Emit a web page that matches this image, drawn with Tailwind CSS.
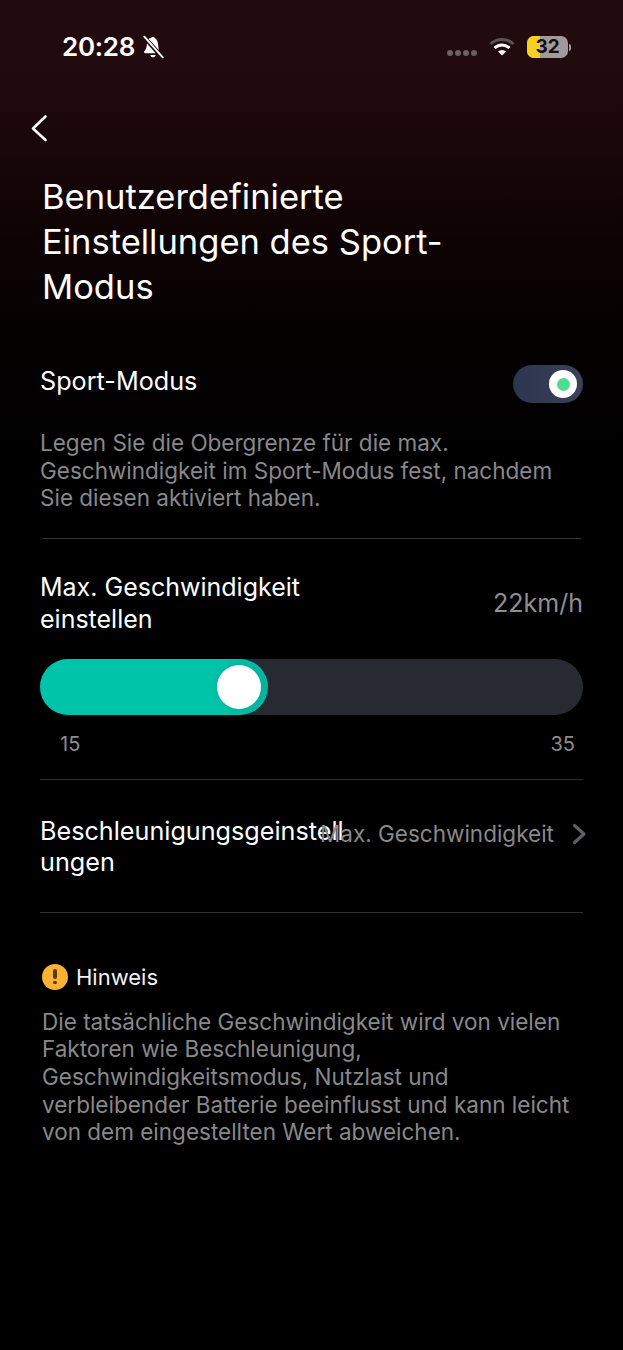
<!DOCTYPE html>
<html lang="en">
<head>
    <meta charset="UTF-8">
    <meta name="viewport" content="width=device-width, initial-scale=1.0">
    <title>Sport-Modus</title>
    <script src="https://cdn.jsdelivr.net/npm/@tailwindcss/browser@4"></script>
</head>
<body class="bg-black">
    <div class="w-[623px] h-[1350px] overflow-hidden font-['Inter',sans-serif] text-white bg-gradient-to-b from-[#220b0e] from-[5%] to-black to-[42%]">
        <!-- Status bar -->
        <div class="h-[94px] flex items-start justify-between pt-[31px] pl-[62px] pr-[52px]">
            <div class="flex items-center gap-[5px]">
                <span class="text-[26px] leading-[31px] font-semibold tracking-[-0.3px]">20:28</span>
                <svg class="w-[26px] h-[26px]" viewBox="0 0 24 24" fill="#fff">
                    <path d="M12 2.500c-1 0-1.600.7-1.700 1.500C7.600 4.700 6.400 7 6.300 9.500c-.1 3-.7 4.800-2.300 6.500-.6.700-.2 1.800.9 1.800h12.800L6.500 5.500"/>
                    <path d="M8 4.500 17.500 15c-.3-1.500-.7-3.300-.8-5.500-.1-2.500-1.500-4.800-3-5.500-.1-.8-.7-1.500-1.700-1.500z"/>
                    <path d="M9.500 19.300h5c-.3 1.300-1.300 2.200-2.500 2.200s-2.200-.9-2.500-2.200z"/>
                    <path d="M3.500 2.800 20.500 22" stroke="#220b0e" stroke-width="3.500"/>
                    <path d="M4 2.500 21 21.500" stroke="#fff" stroke-width="1.800" stroke-linecap="round"/>
                </svg>
            </div>
            <div class="flex items-center pt-[5px]">
                <div class="flex gap-[2px] mr-[12px] mt-[11px]">
                    <span class="w-[6px] h-[6px] rounded-full bg-[#6b6063]"></span>
                    <span class="w-[6px] h-[6px] rounded-full bg-[#6b6063]"></span>
                    <span class="w-[6px] h-[6px] rounded-full bg-[#6b6063]"></span>
                    <span class="w-[6px] h-[6px] rounded-full bg-[#6b6063]"></span>
                </div>
                <svg class="w-[26px] h-[20px] mr-[12px]" viewBox="0 0 26 20" fill="none">
                    <path d="M1.500 7C8 1 18 1 24.500 7" stroke="#5c5052" stroke-width="3"/>
                    <path d="M5.500 11C10 7 16 7 20.500 11" stroke="#fff" stroke-width="3"/>
                    <path d="M9 14.500C11.500 12.500 14.500 12.500 17 14.500L13 18.500z" fill="#fff"/>
                </svg>
                <div class="relative w-[41px] h-[22px] rounded-[7px] overflow-hidden bg-[#a09a9a] text-[#111] text-[19px] leading-[22px] font-bold text-center">
                    <div class="absolute left-0 top-0 bottom-0 w-[13px] bg-[#f6d21f]"></div>
                    <span class="relative">32</span>
                </div>
                <div class="w-[2px] h-[7px] ml-[1px] rounded-r-full bg-[#a09a9a]"></div>
            </div>
        </div>

        <!-- Back -->
        <div class="h-[80px] pl-[30px] pt-[20px]">
            <svg class="w-[20px] h-[28px]" viewBox="0 0 20 28" fill="none">
                <path d="M15.500 2.500 3 14.500 15.500 26" stroke="#fff" stroke-width="2.600" stroke-linecap="round" stroke-linejoin="round"/>
            </svg>
        </div>

        <h1 class="ml-[42px] mr-[160px] text-[34.500px] leading-[45px] font-normal">Benutzerdefinierte Einstellungen des Sport-Modus</h1>

        <div class="mx-[40px]">
            <!-- Sport mode -->
            <div class="flex items-center justify-between mt-[55px] h-[40px]">
                <span class="text-[25.200px] leading-[32px] -translate-y-[3px]">Sport-Modus</span>
                <div class="w-[70px] h-[38px] rounded-full bg-gradient-to-r from-[#2c3550] to-[#3b4258] flex items-center justify-end pr-[6px]">
                    <div class="w-[28px] h-[28px] rounded-full bg-white flex items-center justify-center">
                        <div class="w-[13px] h-[13px] rounded-full bg-[#4fdc8f]"></div>
                    </div>
                </div>
            </div>
            <p class="mt-[25px] text-[22.500px] leading-[27.500px] text-[#88888a]">Legen Sie die Obergrenze für die max. Geschwindigkeit im Sport-Modus fest, nachdem Sie diesen aktiviert haben.</p>
            <div class="mt-[26px] ml-[2px] mr-[2px] h-px bg-[#353537]"></div>

            <!-- Max speed -->
            <div class="flex items-center justify-between mt-[32px]">
                <span class="w-[300px] text-[25px] leading-[32px]">Max. Geschwindigkeit einstellen</span>
                <span class="text-[25px] leading-[32px] text-[#8e8e90]">22km/h</span>
            </div>
            <div class="relative mt-[24px] h-[56px] rounded-full bg-[#272a30]">
                <div class="h-full w-[228px] rounded-full bg-gradient-to-r from-[#00c4aa] from-[80%] to-[#05b8a2] flex items-center justify-end pr-[7px]">
                    <div class="w-[44px] h-[44px] rounded-full bg-white shadow-[0_0_10px_rgba(0,0,0,0.12)]"></div>
                </div>
            </div>
            <div class="flex justify-between pl-[20px] pr-[8px] mt-[17px] text-[20px] leading-[24px] text-[#8c8c8e]">
                <span>15</span>
                <span>35</span>
            </div>
            <div class="mt-[23px] h-px bg-[#2e2e30]"></div>

            <!-- Acceleration -->
            <div class="flex items-center mt-[36px]">
                <span class="w-[305px] shrink-0 break-all text-[25.200px] leading-[31px]">Beschleunigungsgeinstellungen</span>
                <span class="ml-[-25px] text-[22.500px] leading-[32px] text-[#88888a] whitespace-nowrap -translate-y-[13px]">Max. Geschwindigkeit</span>
                <svg class="w-[15px] h-[22px] ml-[18px] shrink-0 -translate-y-[13px]" viewBox="0 0 15 22" fill="none">
                    <path d="M2.500 2.500 12 11 2.500 19.500" stroke="#5f5f63" stroke-width="3.200" stroke-linecap="round" stroke-linejoin="round"/>
                </svg>
            </div>
            <div class="mt-[34px] h-px bg-[#2e2e30]"></div>

            <!-- Note -->
            <div class="flex items-center gap-[8px] mt-[50px] ml-[2px]">
                <div class="w-[26px] h-[26px] rounded-full bg-[#f9b233] flex flex-col items-center justify-center">
                    <div class="w-[3.500px] h-[10px] rounded-full bg-[#5a3a10]"></div>
                    <div class="w-[3.500px] h-[3.500px] mt-[2px] rounded-full bg-[#5a3a10]"></div>
                </div>
                <span class="text-[22px] leading-[28px] text-[#f2f2f2]">Hinweis</span>
            </div>
            <p class="mt-[17px] ml-[2px] text-[22.500px] leading-[27.700px] text-[#88888a]">Die tatsächliche Geschwindigkeit wird von vielen Faktoren wie Beschleunigung, Geschwindigkeitsmodus, Nutzlast und verbleibender Batterie beeinflusst und kann leicht von dem eingestellten Wert abweichen.</p>
        </div>
    </div>
</body>
</html>
